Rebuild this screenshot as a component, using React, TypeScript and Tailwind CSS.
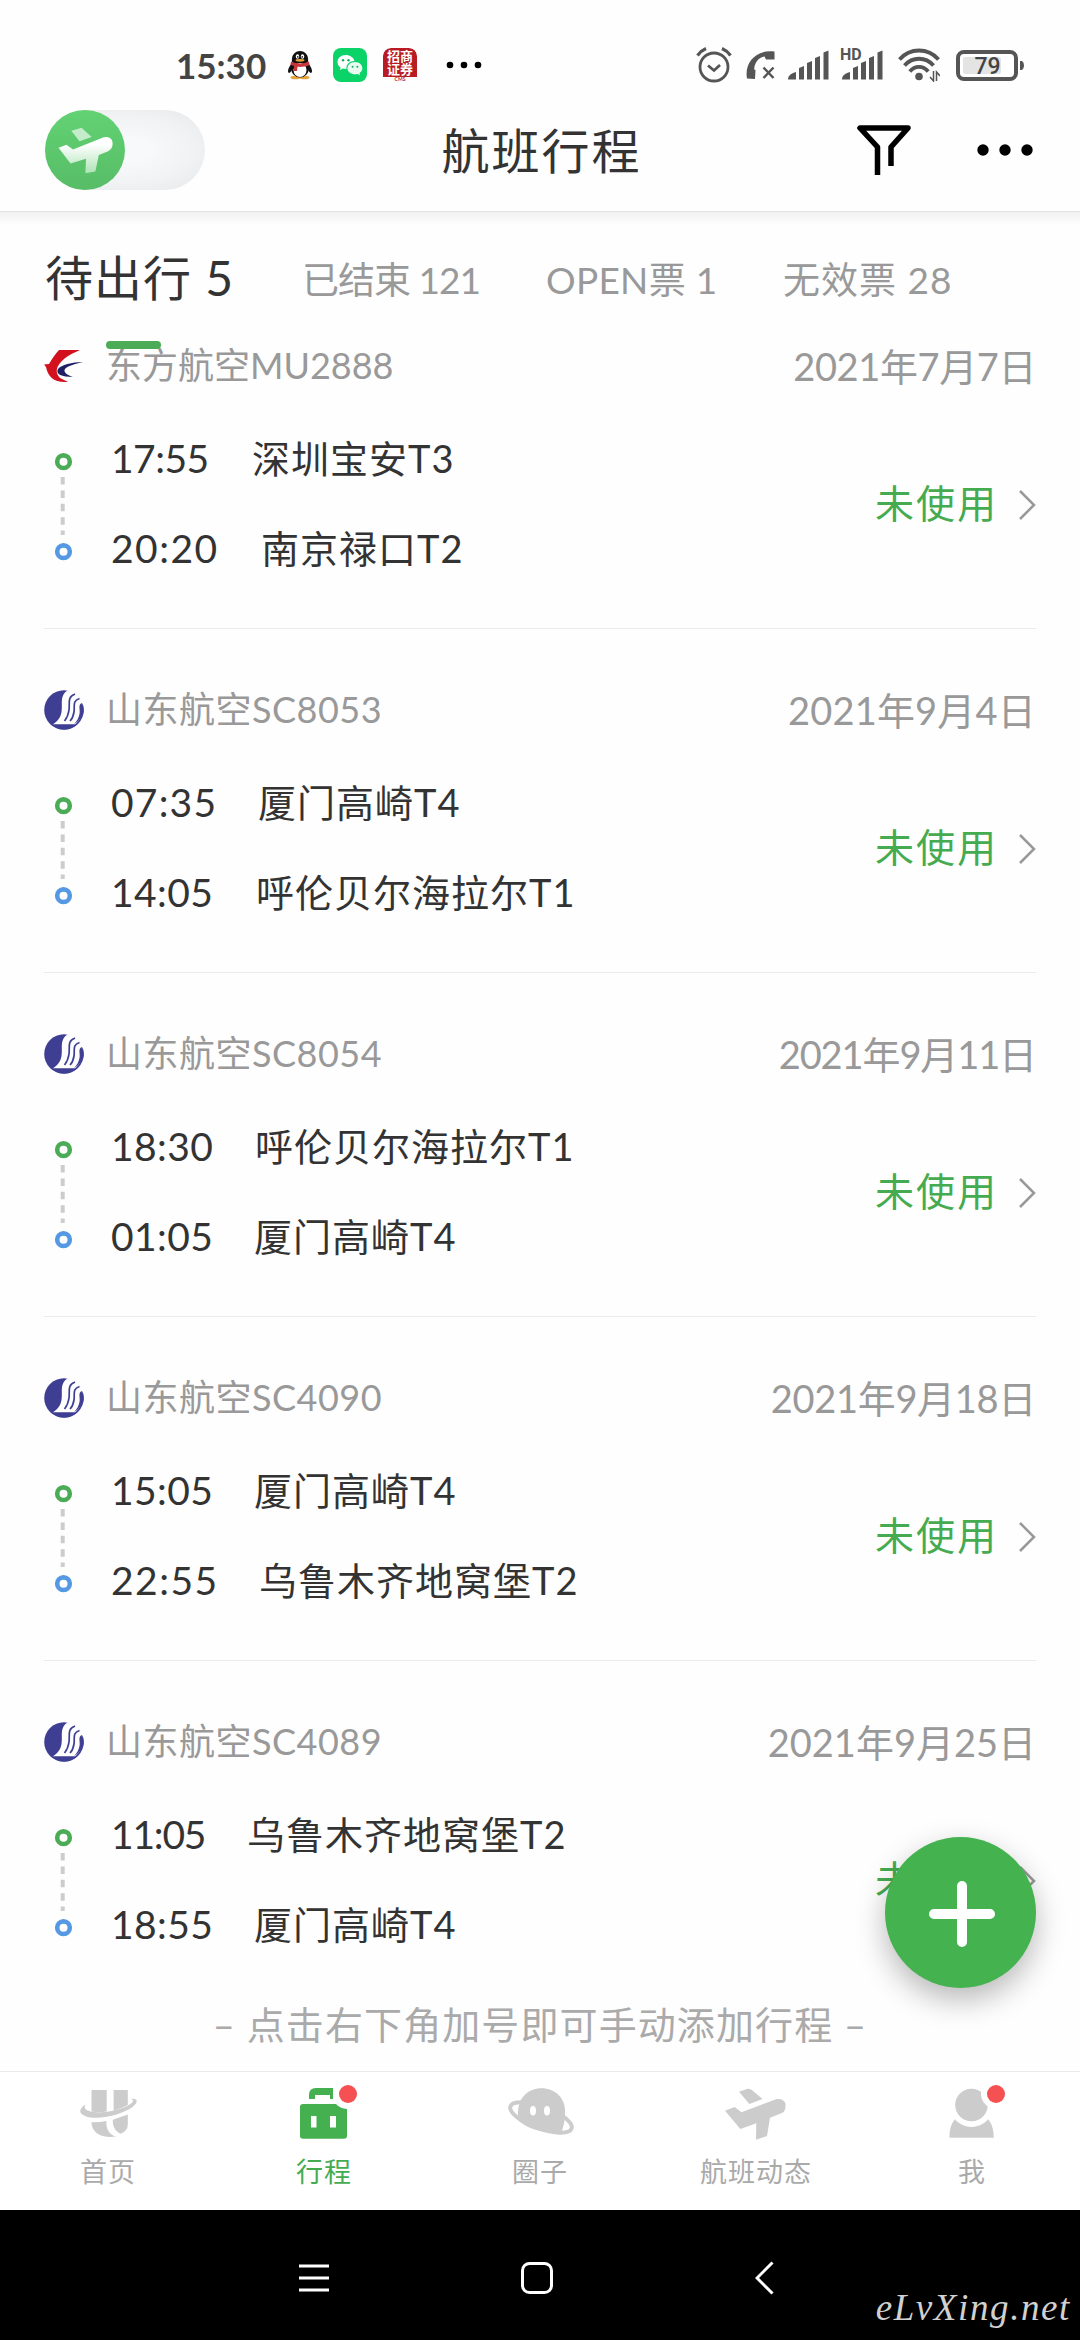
import React from 'react';

interface Leg {
  time: string;
  place: string;
  // width of the time column, the place name starts right after it
  timeWidth: number;
  spacing?: string;
}

interface Trip {
  airline: 'MU' | 'SC';
  flight: string;
  date: string;
  dateSpacing?: string;
  from: Leg;
  to: Leg;
}

const trips: Trip[] = [
  {
    airline: 'MU',
    flight: '东方航空MU2888',
    date: '2021年7月7日',
    dateSpacing: 'tracking-[-0.4px]',
    from: { time: '17:55', place: '深圳宝安T3', timeWidth: 141, spacing: 'tracking-[-0.5px]' },
    to: { time: '20:20', place: '南京禄口T2', timeWidth: 150, spacing: 'tracking-[1.5px]' },
  },
  {
    airline: 'SC',
    flight: '山东航空SC8053',
    date: '2021年9月4日',
    dateSpacing: 'tracking-[0.2px]',
    from: { time: '07:35', place: '厦门高崎T4', timeWidth: 147, spacing: 'tracking-[1.2px]' },
    to: { time: '14:05', place: '呼伦贝尔海拉尔T1', timeWidth: 145 },
  },
  {
    airline: 'SC',
    flight: '山东航空SC8054',
    date: '2021年9月11日',
    dateSpacing: 'tracking-[-1.1px]',
    from: { time: '18:30', place: '呼伦贝尔海拉尔T1', timeWidth: 144 },
    to: { time: '01:05', place: '厦门高崎T4', timeWidth: 143 },
  },
  {
    airline: 'SC',
    flight: '山东航空SC4090',
    date: '2021年9月18日',
    dateSpacing: 'tracking-[-0.3px]',
    from: { time: '15:05', place: '厦门高崎T4', timeWidth: 143 },
    to: { time: '22:55', place: '乌鲁木齐地窝堡T2', timeWidth: 148, spacing: 'tracking-[1.5px]' },
  },
  {
    airline: 'SC',
    flight: '山东航空SC4089',
    date: '2021年9月25日',
    from: { time: '11:05', place: '乌鲁木齐地窝堡T2', timeWidth: 136, spacing: 'tracking-[-1.2px]' },
    to: { time: '18:55', place: '厦门高崎T4', timeWidth: 143 },
  },
];

const QQIcon = () => (
  <svg width="26" height="30" viewBox="0 0 26 30">
    <ellipse cx="8.5" cy="27.5" rx="5" ry="1.8" fill="#e8a33a" />
    <ellipse cx="17.5" cy="27.5" rx="5" ry="1.8" fill="#e8a33a" />
    <path d="M5 13C1 18 0 22 2 23C3 23 4 21 5 20ZM21 13C25 18 26 22 24 23C23 23 22 21 21 20Z" fill="#111" />
    <ellipse cx="13" cy="18" rx="9" ry="9.5" fill="#111" />
    <ellipse cx="13" cy="20" rx="6.5" ry="7" fill="#fff" />
    <path d="M5 12C4 5 8 1 13 1S22 5 21 12Z" fill="#111" />
    <ellipse cx="10.5" cy="6.5" rx="1.7" ry="2.2" fill="#fff" />
    <ellipse cx="15.5" cy="6.5" rx="1.7" ry="2.2" fill="#fff" />
    <circle cx="10.8" cy="6.9" r=".8" fill="#111" />
    <circle cx="15.2" cy="6.9" r=".8" fill="#111" />
    <ellipse cx="13" cy="10.3" rx="4.5" ry="1.4" fill="#e8a33a" />
    <path d="M4 11.5C9 14 17 14 22 11.5L22.5 15C18 17 14 17 10.5 16.8L10 21H7V16L3.5 14.8Z" fill="#c8363b" />
  </svg>
);

const WeChatIcon = () => (
  <svg width="34" height="34" viewBox="0 0 34 34">
    <rect width="34" height="34" rx="8" fill="#0bd368" />
    <path d="M12.8 7C8 7 4.5 10 4.5 14C4.5 16.4 5.7 18.3 7.6 19.6L7 22L10 20.6C11 20.9 12 21 13.5 21C12.7 16 17 12.8 21.5 12.9C20.6 9.4 17 7 12.8 7Z" fill="#fff" />
    <path d="M22 14C17.8 14 14.5 16.8 14.5 20.2S17.8 26.3 22 26.3C22.9 26.3 23.8 26.2 24.6 25.9L27 27.2L26.5 25C28.3 23.9 29.3 22.2 29.3 20.2C29.3 16.8 26.2 14 22 14Z" fill="#e9fbf1" />
    <circle cx="10" cy="12.2" r="1.2" fill="#0bb35a" />
    <circle cx="15.5" cy="12.2" r="1.2" fill="#0bb35a" />
    <circle cx="19.6" cy="18.7" r="1" fill="#0bb35a" />
    <circle cx="24.4" cy="18.7" r="1" fill="#0bb35a" />
  </svg>
);

const AlarmIcon = () => (
  <svg width="36" height="36" viewBox="0 0 36 36" fill="none" stroke="#555" strokeWidth="2.8">
    <circle cx="18" cy="20" r="14" />
    <path d="M12 18.5L18 23.5L24 18" />
    <path d="M1.5 8.5C4 5 6.5 3 10 1.5M34.5 8.5C32 5 29.5 3 26 1.5" strokeWidth="3.2" />
  </svg>
);

const CallIcon = () => (
  <svg width="30" height="30" viewBox="0 0 30 30">
    <path d="M1 28.5C-2 12 11 -1 28.5 1.5V9.5H20L18.5 6.5C12 8 8.5 13 8.2 19.5L9.5 20L9 29Z" fill="#555" />
    <path d="M17.5 17.5L27.5 28M27.5 17.5L17.5 28" stroke="#555" strokeWidth="2.5" />
  </svg>
);

const SignalIcon = () => (
  <svg width="41" height="30" viewBox="0 0 41 30" fill="#555">
    <path d="M0 29.5C0 25 4 23 8 22V29.5Z" />
    <path d="M11 18L16 16V29.5H11Z" />
    <path d="M19 13L24 11V29.5H19Z" />
    <path d="M27 8L32 6V29.5H27Z" />
    <path d="M35.5 2.500L40.5 .5V29.5H35.5Z" />
  </svg>
);

const WifiIcon = () => (
  <svg width="42" height="34" viewBox="0 0 42 34" fill="none" stroke="#555" strokeWidth="3.8">
    <path d="M1.5 11.5C12 -.5 30 -.5 40.5 11.5" />
    <path d="M6.5 17.5C14.5 8.5 27.5 8.5 35.5 17.5" />
    <path d="M11.8 23.5C17 17.3 25 17.3 30.2 23.5" />
    <circle cx="21" cy="28.5" r="3.8" fill="#555" stroke="none" />
    <path d="M35.5 23V33L32 29M38.5 33V24L42 28" strokeWidth="1.5" />
  </svg>
);

const BatteryIcon = () => (
  <svg width="69" height="32" viewBox="0 0 69 32">
    <rect x="2" y="3" width="58" height="27" rx="6" fill="#fff" stroke="#555" strokeWidth="4" />
    <rect x="7" y="8" width="38" height="17" rx="2" fill="#e4e4e4" />
    <path d="M64 12H66Q68 13 68 16.5T66 21H64Z" fill="#555" />
    <text x="31.5" y="25" textAnchor="middle" fontSize="23" fontWeight="500" fontFamily="Roboto, sans-serif" fill="#444">79</text>
  </svg>
);

const EasternLogo = () => (
  <svg width="40" height="34" viewBox="0 0 40 34">
    <path d="M15 1H36C29 4 21 8 17 13C12 18 11 24 16 29L24 33C10 34 4 28 2 18L0 15.5L5 15C8 10 11 5 15 1Z" fill="#d3101e" />
    <path d="M39 13C28 13 17 16 14 20C11 25 18 28 29 28C23 26 19 23 21 20C23 17 31 15 39 13Z" fill="#1f1f66" />
  </svg>
);

const ShandongLogo = () => (
  <svg width="40" height="40" viewBox="0 0 40 40">
    <circle cx="20" cy="20" r="19.8" fill="#3e3f93" />
    <path d="M24 0C15 6 19 14 17.5 22C16.5 28 13 32 8.5 34.5H31C37 29 40 24 39.5 14C37 8 33 2 24 0Z" fill="#fefefe" />
    <path d="M31 4C23 7 26 13 25 20C24.3 25 23 28 20.5 31M35.5 8.5C28 11 31 16 30 22C29.4 26 28 29 26 31" fill="none" stroke="#3e3f93" strokeWidth="1.7" />
    <path d="M38 13C33.5 15 36.5 19 35.5 24C34.7 28 33 31 30 34C36 31 40 25 39.8 19C39.5 16 38.8 14.5 38 13Z" fill="#3e3f93" />
    <path d="M8 34.5H33C26 41 14 41 8 34.5Z" fill="#3e3f93" />
  </svg>
);

const RouteMarker = () => (
  <svg width="40" height="180" viewBox="0 0 40 180" fill="none">
    <circle cx="19.5" cy="46.7" r="6.3" stroke="#4cab56" strokeWidth="4.6" />
    <path d="M18.7 62V120" stroke="#ccc" strokeWidth="4" strokeDasharray="7.5 5.9" />
    <circle cx="19.5" cy="136.7" r="6.3" stroke="#5499e2" strokeWidth="4.6" />
  </svg>
);

const HomeIcon = () => (
  <svg width="58" height="54" viewBox="0 0 58 54" fill="#ccc">
    <path d="M12.5 4H27.7V25.5Q20 26.5 12.5 25.5Z" />
    <path d="M34.6 4H48.8V19Q43 22.5 34.6 24.7Z" />
    <path d="M6.5 18.5C-1 23 -1 29 10 31.2C25 33.8 45 27 53 21.5C60 16 59 11.5 51.5 13C57 14 53 18 45 21.5C34 26 20 27.5 11 25.3C6 24 4.5 21.5 6.5 18.5Z" />
    <path d="M12.5 36.2Q20 36.5 27.5 35C26.5 43 31 49.5 37.5 50.5C22 52.5 12.5 46.5 12.5 36.2Z" />
    <path d="M33.8 33.8L48.8 28.5V38C48.8 43 46 46 41.5 47.8C36.5 45.5 33.5 41 33.8 33.8Z" />
  </svg>
);

const TripIcon = () => (
  <svg width="50" height="54" viewBox="0 0 50 54">
    <path d="M10 13V9Q10 2 17 2H34V13H31V9H16V13Z" fill="#45b04f" />
    <path d="M4 18H37Q41 22.5 48 23V50Q48 52.7 45 52.7H4Q1 52.7 1 50V21Q1 18 4 18Z" fill="#45b04f" />
    <path d="M12 30H17.5V41.5H12ZM31 30H37V41.5H31Z" fill="#fff" />
  </svg>
);

const CircleIcon = () => (
  <svg width="80" height="54" viewBox="0 6 80 54">
    <ellipse cx="41" cy="37.5" rx="32.5" ry="11" transform="rotate(20 41 37.5)" fill="none" stroke="#ccc" strokeWidth="4" />
    <path d="M18 33C18 18 28 8.3 41.5 8.3S65 18 65 31C65 40 64 46 61 52.5C42 54 26 48 18 40Z" fill="#ccc" />
    <ellipse cx="33" cy="30.7" rx="3" ry="4.8" fill="#fff" />
    <ellipse cx="47" cy="30.7" rx="3" ry="4.8" fill="#fff" />
  </svg>
);

const PlaneIcon = () => (
  <svg width="62" height="56" viewBox="0 0 62 56" fill="#ccc">
    <path d="M14 5.7L22 3Q25 2.2 27.5 4.5L37.5 13L24.4 18Z" />
    <path d="M0 24.7L9.6 21L16.5 26.3L51 13.3C56 12 60.5 14.5 60.6 19C60.6 23 59.5 26 57 27L45 31.7L42 50L31 53.7L31.3 37.3L15.4 43Z" />
  </svg>
);

const MeIcon = () => (
  <svg width="50" height="54" viewBox="0 0 50 54">
    <path d="M8 33C4 38 2.3 44 2.5 51.7H46.7C46.7 44 45 38 41 33Z" fill="#ccc" />
    <circle cx="24.5" cy="19" r="22" fill="#fff" />
    <circle cx="24.5" cy="19" r="16.3" fill="#ccc" />
    <circle cx="49" cy="7.7" r="15" fill="#fff" />
  </svg>
);

const navItems = [
  { label: '首页', icon: HomeIcon, active: false, badge: false },
  { label: '行程', icon: TripIcon, active: true, badge: true },
  { label: '圈子', icon: CircleIcon, active: false, badge: false },
  { label: '航班动态', icon: PlaneIcon, active: false, badge: false },
  { label: '我', icon: MeIcon, active: false, badge: true },
];

const StatusBar = () => (
  <div className="flex h-[106px] items-end justify-between pb-[19px] pl-[176px] pr-[55px]">
    <div className="flex h-11 items-center">
      <span className="w-[111px] text-[35px] font-bold text-[#444]">15:30</span>
      <QQIcon />
      <div className="ml-[20px]"><WeChatIcon /></div>
      <div className="ml-[16px] flex h-[34px] w-[34px] flex-col items-center overflow-hidden rounded-t-[8px] bg-white">
        <div className="flex h-[29px] w-full flex-col items-center justify-center rounded-t-[8px] bg-[#b81c22] text-[13px] font-bold leading-[13px] text-white">
          <span>招商</span>
          <span>证券</span>
        </div>
        <span className="text-[5px] font-bold leading-[5px] text-[#b81c22]">CMS</span>
      </div>
      <svg className="ml-[29px]" width="36" height="8" viewBox="0 0 36 8">
        <circle cx="4" cy="4" r="3.3" />
        <circle cx="18" cy="4" r="3.3" />
        <circle cx="32" cy="4" r="3.3" />
      </svg>
    </div>
    <div className="flex h-11 items-center">
      <AlarmIcon />
      <div className="ml-[14px]"><CallIcon /></div>
      <div className="ml-[12px]"><SignalIcon /></div>
      <div className="relative ml-[13px]">
        <SignalIcon />
        <span className="absolute -left-[2px] -top-[3px] bg-[#fefefe] pr-px font-[Roboto] text-[16px] font-bold leading-[15px] text-[#555]">HD</span>
      </div>
      <div className="ml-[15px]"><WifiIcon /></div>
      <div className="ml-[16px]"><BatteryIcon /></div>
    </div>
  </div>
);

const Header = () => (
  <div className="flex h-[105px] items-start justify-between pl-[45px] pr-[46px] pt-1">
    <div className="h-20 w-[160px] rounded-full bg-[radial-gradient(ellipse_at_center,#f8f9fa_20%,#f1f2f4_60%,#e6e7e9_100%)]">
      <div className="h-20 w-20 rounded-full bg-gradient-to-b from-[#62d273] to-[#57bd67]">
        <svg width="80" height="80" viewBox="0 0 80 80">
          <defs>
            <linearGradient id="plane" x1="0" y1="0" x2="0" y2="1">
              <stop offset="0.2" stopColor="#fff" />
              <stop offset="1" stopColor="#aee3b5" />
            </linearGradient>
          </defs>
          <path d="M26.3 20.7L36.6 17.7L46.6 27L34.5 31.3Z" fill="#c4ecca" />
          <path d="M13.5 37.7L21.5 34.7L28 39.5L58 27.5C64 25.5 68 29 67.6 34C67.5 38 65 40.5 62 41.7L53.8 45L50.4 61.5L40.4 63.3L41 48.7L25.5 53.5Z" fill="url(#plane)" />
        </svg>
      </div>
    </div>
    <div className="ml-[21px] flex h-20 items-center pt-px text-[48px] tracking-[2px]">航班行程</div>
    <div className="flex h-20 items-center gap-[65px]">
      <svg width="54" height="50" viewBox="0 0 54 50" fill="none" stroke="#000" strokeWidth="5.5">
        <path d="M20.5 50V22L3 3H51L34 22V41" strokeLinejoin="round" />
      </svg>
      <svg width="58" height="12" viewBox="0 0 58 12">
        <circle cx="7" cy="6" r="5.7" />
        <circle cx="29" cy="6" r="5.7" />
        <circle cx="51" cy="6" r="5.7" />
      </svg>
    </div>
  </div>
);

const Tabs = () => (
  <div className="relative h-[130px] border-t border-[#e2e2e2] bg-gradient-to-b from-[#f1f1f1] to-[#fefefe] to-10% text-[#999]">
    <div className="flex h-full items-center pl-[45px] pt-[2px]">
      <span className="w-[257px] whitespace-pre text-[48px] tracking-[1px] text-[#333]">待出行 5</span>
      <span className="w-[244px] whitespace-pre pt-1 text-[37px] tracking-[-1px]">已结束 121</span>
      <span className="w-[237px] whitespace-pre pt-1 text-[37px] tracking-[0.3px]">OPEN票 1</span>
      <span className="whitespace-pre pt-1 text-[37px] tracking-[1px]">无效票 28</span>
    </div>
    <div className="absolute -bottom-[8px] left-[106px] z-10 h-2 w-[55px] rounded-full bg-[#4cab56]" />
  </div>
);

const LegRow: React.FC<{ leg: Leg }> = ({ leg }) => (
  <div className="flex h-[90px] items-center pb-[4px] text-[39px]">
    <span className={leg.spacing || 'tracking-[0.4px]'} style={{ width: leg.timeWidth }}>{leg.time}</span>
    <span className="text-[38px] tracking-[1px]">{leg.place}</span>
  </div>
);

const TripItem: React.FC<{ trip: Trip; last: boolean }> = ({ trip, last }) => (
  <div className={`mx-11 h-[344px] shrink-0 border-b pt-[61px] ${last ? 'border-transparent' : 'border-[#ebebeb]'}`}>
    <div className="flex h-10 items-center text-[#999]">
      <div className="w-[62px]">{trip.airline === 'MU' ? <EasternLogo /> : <ShandongLogo />}</div>
      <span className={`flex-1 pb-[2px] text-[36px] ${trip.airline === 'SC' ? 'tracking-[0.5px]' : ''}`}>{trip.flight}</span>
      <span className={`pt-px text-[38px] ${trip.dateSpacing || ''}`}>{trip.date}</span>
    </div>
    <div className="mt-[29px] flex h-[180px] items-center">
      <RouteMarker />
      <div className="ml-[27px] flex-1">
        <LegRow leg={trip.from} />
        <LegRow leg={trip.to} />
      </div>
      <span className="pb-[3px] text-[39px] tracking-[2px] text-[#45ab50]">未使用</span>
      <svg className="ml-[20px]" width="18" height="32" viewBox="0 0 18 32" fill="none" stroke="#999" strokeWidth="2.5">
        <path d="M2 2L16 16L2 30" />
      </svg>
    </div>
  </div>
);

const NavBar = () => (
  <div className="flex h-[139px] border-t border-[#eaeaea] bg-white">
    {navItems.map(({ label, icon: Icon, active, badge }) => (
      <div key={label} className="flex flex-1 flex-col items-center pt-[14px]">
        <div className="relative">
          <Icon />
          {badge && <span className="absolute left-[40px] top-[-1px] h-[18px] w-[18px] rounded-full bg-[#f55052]" />}
        </div>
        <span className={`mt-auto pb-[17px] text-[27px] leading-[42px] tracking-[1px] ${active ? 'text-[#45ab50]' : 'text-[#aaa]'}`}>{label}</span>
      </div>
    ))}
  </div>
);

const SystemBar = () => (
  <div className="relative flex h-[130px] items-center bg-black pl-[299px] pt-[6px]">
    <svg width="30" height="34" viewBox="0 0 30 34" stroke="#fff" strokeWidth="3">
      <path d="M0 5H30M0 17H30M0 29H30" />
    </svg>
    <svg className="ml-[191px]" width="34" height="34" viewBox="0 0 34 34" fill="none" stroke="#fff" strokeWidth="3">
      <rect x="2.5" y="2.5" width="29" height="29" rx="7" />
    </svg>
    <svg className="ml-[201px]" width="20" height="34" viewBox="0 0 20 34" fill="none" stroke="#fff" strokeWidth="3">
      <path d="M17.5 1.5L2 17L17.5 32.5" />
    </svg>
    <span className="absolute bottom-[10px] right-[9px] font-['Liberation_Serif',serif] text-[37px] italic leading-[44px] tracking-[1.6px] text-[#d0d0d0]">eLvXing.net</span>
  </div>
);

const App: React.FC = () => {
  return (
    <div className="flex h-[2340px] w-[1080px] flex-col overflow-hidden bg-[#fefefe] font-['Lato','Noto_Sans_CJK_SC',sans-serif] text-[#333]">
      <StatusBar />
      <Header />
      <Tabs />

      {/* Trip list, scrolled a little under the tabs */}
      <div className="relative flex-1">
        <div className="flex h-full flex-col overflow-hidden">
          <div className="-mt-[56px] flex flex-col">
            {trips.map((trip, index) => (
              <TripItem key={trip.flight} trip={trip} last={index === trips.length - 1} />
            ))}
          </div>
          <div className="-mt-[6px] text-center text-[38px] leading-[50px] tracking-[1.1px] text-[#aaa]">
            – 点击右下角加号即可手动添加行程 –
          </div>
        </div>
        <button className="absolute bottom-[83px] right-[44px] flex h-[151px] w-[151px] items-center justify-center rounded-full bg-[#45b250] shadow-[0_12px_30px_rgba(0,0,0,0.28)]">
          <svg width="68" height="68" viewBox="0 0 68 68" stroke="#fff" strokeWidth="10" strokeLinecap="round">
            <path d="M35 7V63M7 35H63" />
          </svg>
        </button>
      </div>

      <NavBar />
      <SystemBar />
    </div>
  );
};

export default App;
